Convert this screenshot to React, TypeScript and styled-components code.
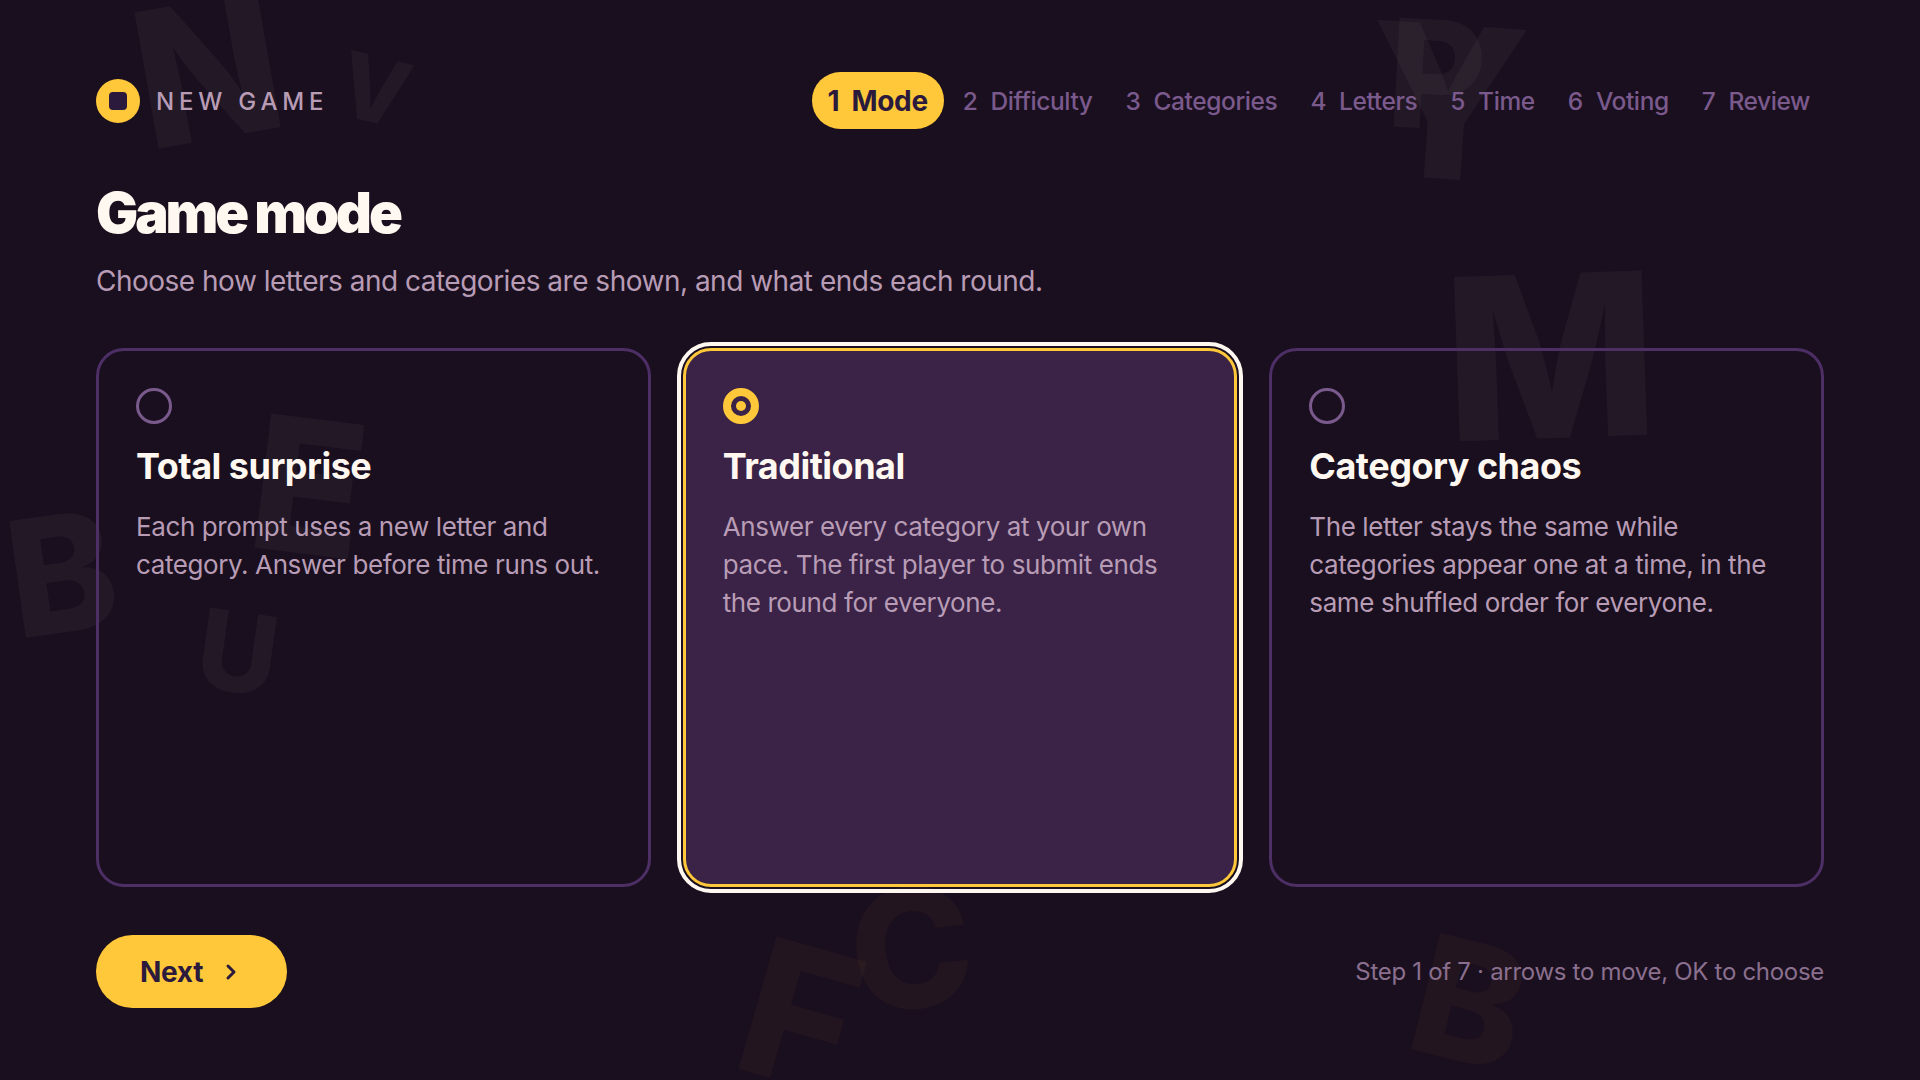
import { createGlobalStyle, styled } from "styled-components";
import { ChevronRight } from "lucide-react";

const GlobalStyle = createGlobalStyle`
  * {
    box-sizing: border-box;
  }

  html,
  body {
    margin: 0;
    padding: 0;
    background: #1a0f1f;
  }
`;

const Page = styled.main`
  position: relative;
  width: 1920px;
  height: 1080px;
  overflow: hidden;
  padding: 72px 96px 72px;
  display: flex;
  flex-direction: column;
  background: #1a0f1f;
  color: #fff8f0;
  font-family: Inter, "Liberation Sans", sans-serif;
`;

const Backdrop = styled.div`
  position: absolute;
  inset: 0;
  pointer-events: none;
`;

const Letter = styled.span<{ $x: number; $y: number; $size: number; $rot: number; $warm?: boolean }>`
  position: absolute;
  left: ${(p) => p.$x}px;
  top: ${(p) => p.$y}px;
  font-size: ${(p) => p.$size}px;
  line-height: 1;
  font-weight: 800;
  transform: rotate(${(p) => p.$rot}deg);
  color: ${(p) => (p.$warm ? "rgba(255, 200, 60, 0.035)" : "rgba(255, 248, 240, 0.04)")};
`;

const Content = styled.div`
  position: relative;
  flex: 1;
  display: flex;
  flex-direction: column;
`;

const Header = styled.header`
  display: flex;
  justify-content: space-between;
  align-items: center;
  height: 57px;
`;

const Brand = styled.div`
  display: flex;
  align-items: center;
  gap: 16px;
`;

const BrandMark = styled.span`
  width: 44px;
  height: 44px;
  border-radius: 50%;
  background: #ffc83a;
  display: flex;
  align-items: center;
  justify-content: center;

  &::after {
    content: "";
    width: 18px;
    height: 18px;
    border-radius: 4px;
    background: #2b1a3c;
  }
`;

const BrandText = styled.span`
  padding-top: 2px;
  font-size: 24px;
  font-weight: 500;
  letter-spacing: 0.2em;
  color: #b89cb5;
`;

const Steps = styled.nav`
  display: flex;
  align-items: center;
  gap: 5px;
`;

const Step = styled.span<{ $active?: boolean }>`
  display: flex;
  gap: ${(p) => (p.$active ? 12 : 13)}px;
  align-items: center;
  height: 57px;
  padding: ${(p) => (p.$active ? "0 16px" : "1px 14px 0")};
  border-radius: 29px;
  font-size: ${(p) => (p.$active ? 28 : 24.5)}px;
  font-weight: ${(p) => (p.$active ? 700 : 500)};
  letter-spacing: ${(p) => (p.$active ? -0.3 : -0.4)}px;
  color: ${(p) => (p.$active ? "#2b1a3c" : "#7a5a8c")};
  background: ${(p) => (p.$active ? "#ffc83a" : "transparent")};
`;

const Title = styled.h1`
  margin: 50px 0 0;
  font-size: 56px;
  line-height: 68px;
  font-weight: 900;
  letter-spacing: -0.055em;
  color: #fff8f0;
`;

const Subtitle = styled.p`
  margin: 14px 0 0;
  font-size: 28px;
  line-height: 40px;
  letter-spacing: -0.5px;
  color: #b89cb5;
`;

const Cards = styled.section`
  margin-top: 47px;
  height: 539px;
  display: grid;
  grid-template-columns: repeat(3, 1fr);
  gap: 32px;
`;

const Card = styled.article<{ $selected?: boolean }>`
  padding: 37px;
  border-radius: 28px;
  border: 3px solid ${(p) => (p.$selected ? "#ffc83a" : "#4d2f66")};
  background: ${(p) => (p.$selected ? "#3a2347" : "transparent")};
  outline: ${(p) => (p.$selected ? "4px solid #fff8f0" : "none")};
  outline-offset: 2px;
`;

const Radio = styled.span<{ $on?: boolean }>`
  display: flex;
  align-items: center;
  justify-content: center;
  width: 36px;
  height: 36px;
  border-radius: 50%;
  border: ${(p) => (p.$on ? "8px solid #ffc83a" : "3px solid #7a5a8c")};

  &::after {
    content: "";
    display: ${(p) => (p.$on ? "block" : "none")};
    width: 10px;
    height: 10px;
    border-radius: 50%;
    background: #ffc83a;
  }
`;

const CardTitle = styled.h2`
  margin: 20px 0 0;
  font-size: 36px;
  line-height: 44px;
  font-weight: 700;
  letter-spacing: -0.5px;
  color: #fff8f0;
`;

const CardText = styled.p`
  margin: 20px 0 0;
  font-size: 26px;
  line-height: 38px;
  letter-spacing: -0.4px;
  color: #b89cb5;
`;

const Footer = styled.footer`
  margin-top: 48px;
  display: flex;
  justify-content: space-between;
  align-items: center;
`;

const NextButton = styled.button`
  display: flex;
  align-items: center;
  gap: 16px;
  height: 73px;
  padding: 0 44px;
  border: 0;
  border-radius: 37px;
  background: #ffc83a;
  color: #2b1a3c;
  font-family: inherit;
  font-size: 28px;
  font-weight: 700;
  letter-spacing: -0.3px;
`;

const Hint = styled.span`
  font-size: 24px;
  letter-spacing: -0.3px;
  color: #8a6f8e;
`;

const letters = [
  { c: "N", x: 135, y: -25, size: 190, rot: -10 },
  { c: "V", x: 340, y: 45, size: 90, rot: 14 },
  { c: "Y", x: 1367, y: -4, size: 212, rot: 4 },
  { c: "P", x: 1388, y: 0, size: 150, rot: 3 },
  { c: "M", x: 1444, y: 243, size: 226, rot: -2 },
  { c: "E", x: 252, y: 394, size: 186, rot: 7 },
  { c: "B", x: 8, y: 492, size: 162, rot: -8 },
  { c: "U", x: 198, y: 597, size: 110, rot: 8 },
  { c: "F", x: 745, y: 920, size: 190, rot: 16, warm: true },
  { c: "C", x: 850, y: 866, size: 165, rot: -6, warm: true },
  { c: "B", x: 1415, y: 920, size: 165, rot: 14, warm: true },
];

const steps = ["Mode", "Difficulty", "Categories", "Letters", "Time", "Voting", "Review"];

const modes = [
  {
    title: "Total surprise",
    text: "Each prompt uses a new letter and category. Answer before time runs out.",
  },
  {
    title: "Traditional",
    text: "Answer every category at your own pace. The first player to submit ends the round for everyone.",
    selected: true,
  },
  {
    title: "Category chaos",
    text: "The letter stays the same while categories appear one at a time, in the same shuffled order for everyone.",
  },
];

export default function App() {
  return (
    <Page>
      <GlobalStyle />
      <Backdrop>
        {letters.map((l, i) => (
          <Letter key={i} $x={l.x} $y={l.y} $size={l.size} $rot={l.rot} $warm={l.warm}>
            {l.c}
          </Letter>
        ))}
      </Backdrop>
      <Content>
        <Header>
          <Brand>
            <BrandMark />
            <BrandText>NEW GAME</BrandText>
          </Brand>
          <Steps>
            {steps.map((s, i) => (
              <Step key={s} $active={i === 0}>
                <span>{i + 1}</span>
                <span>{s}</span>
              </Step>
            ))}
          </Steps>
        </Header>
        <Title>Game mode</Title>
        <Subtitle>Choose how letters and categories are shown, and what ends each round.</Subtitle>
        <Cards>
          {modes.map((m) => (
            <Card key={m.title} $selected={m.selected}>
              <Radio $on={m.selected} />
              <CardTitle>{m.title}</CardTitle>
              <CardText>{m.text}</CardText>
            </Card>
          ))}
        </Cards>
        <Footer>
          <NextButton>
            Next
            <ChevronRight size={24} strokeWidth={3} />
          </NextButton>
          <Hint>Step 1 of 7 · arrows to move, OK to choose</Hint>
        </Footer>
      </Content>
    </Page>
  );
}
